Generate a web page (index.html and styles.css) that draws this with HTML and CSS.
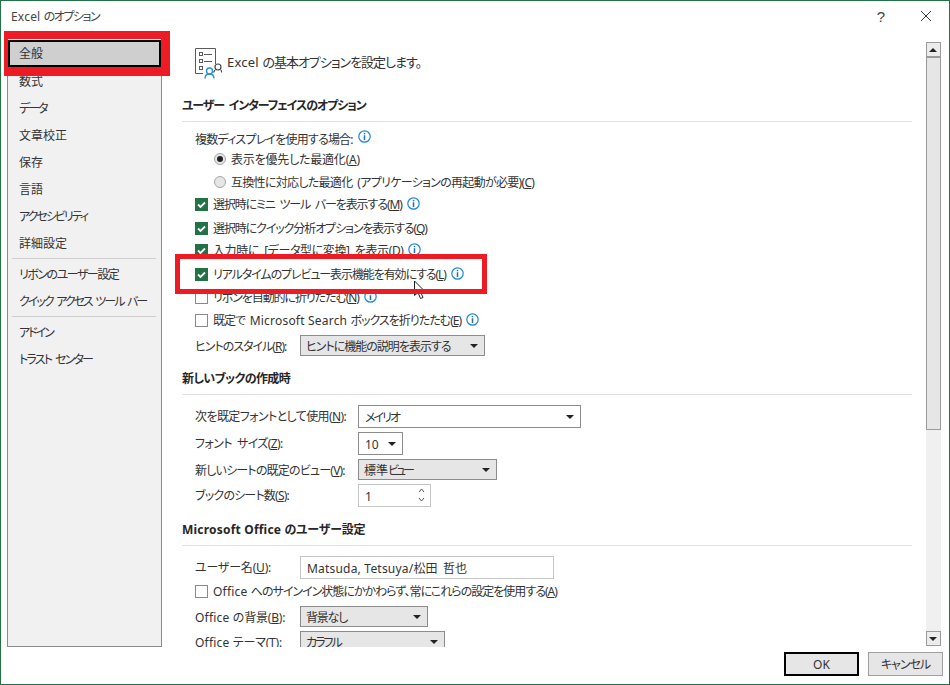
FILE: index.html
```html
<!DOCTYPE html>
<html lang="ja">
<head>
<meta charset="utf-8">
<title>Excel のオプション</title>
<link rel="stylesheet" href="styles.css">
</head>
<body>
<div class="win">
  <header class="titlebar">
    <span class="title ls15"><span class="lat">Excel </span>のオプション</span>
    <div class="winbtns">
      <span class="help">?</span>
      <svg class="close" width="12" height="12" viewBox="0 0 12 12"><path d="M1 1L11 11M11 1L1 11" stroke="#3a3a3a" stroke-width="1" fill="none"/></svg>
    </div>
  </header>
  <div class="body">
    <nav class="nav">
      <div class="nav-item sel">全般</div>
      <div class="nav-item">数式</div>
      <div class="nav-item ls20">データ</div>
      <div class="nav-item">文章校正</div>
      <div class="nav-item">保存</div>
      <div class="nav-item">言語</div>
      <div class="nav-item ls20">アクセシビリティ</div>
      <div class="nav-item">詳細設定</div>
      <div class="nav-sep"></div>
      <div class="nav-item ls15">リボンのユーザー設定</div>
      <div class="nav-item ls20">クイック アクセス ツール バー</div>
      <div class="nav-sep"></div>
      <div class="nav-item ls20">アドイン</div>
      <div class="nav-item ls18">トラスト センター</div>
    </nav>
    <main class="main">
      <div class="intro">
        <svg class="intro-icon" width="27" height="31" viewBox="0 0 27 31">
          <path d="M20.500 16V.5H.5V25.500H8" fill="none" stroke="#5a5a5a"/>
          <rect x="4.500" y="4.500" width="3" height="3" fill="none" stroke="#5a5a5a"/>
          <rect x="4.500" y="11.500" width="3" height="3" fill="none" stroke="#5a5a5a"/>
          <rect x="4.500" y="18.500" width="3" height="3" fill="none" stroke="#5a5a5a"/>
          <path d="M9 6.500h8M9 13.500h8" stroke="#5a5a5a"/>
          <circle cx="14.500" cy="23" r="3" fill="#fff" stroke="#2e8fd8" stroke-width="1.400"/>
          <path d="M10 30.500c0-3 2-4.500 4.500-4.500s4.500 1.500 4.500 4.500" fill="none" stroke="#2e8fd8" stroke-width="1.400"/>
          <circle cx="23" cy="19" r="3" fill="#fff" stroke="#444" stroke-width="1.200"/>
          <path d="M20 22L18.500 24.500M26 22L27 24.500" fill="none" stroke="#444" stroke-width="1.200"/>
        </svg>
        <span class="intro-text"><span class="lat">Excel </span>の基本オプションを設定します。</span>
      </div>

      <h2 class="head head-first ls11">ユーザー インターフェイスのオプション</h2>
      <div class="row h20"><span class="ls8">複数ディスプレイを使用する場合:</span><svg class="info up" viewBox="0 0 13 13"><use href="#i"/></svg></div>
      <div class="row h23 sub"><span class="radio on"></span><span class="ls2">表示を優先した最適化(<u>A</u>)</span></div>
      <div class="row h22 sub"><span class="radio"></span><span class="ls7">互換性に対応した最適化 (アプリケーションの再起動が必要)(<u>C</u>)</span></div>
      <div class="row h24"><span class="check on"><svg viewBox="0 0 13 13"><use href="#c"/></svg></span><span class="ls11">選択時にミニ ツール バーを表示する(<u>M</u>)</span><svg class="info" viewBox="0 0 13 13"><use href="#i"/></svg></div>
      <div class="row h22"><span class="check on"><svg viewBox="0 0 13 13"><use href="#c"/></svg></span><span class="ls11">選択時にクイック分析オプションを表示する(<u>Q</u>)</span></div>
      <div class="row h24"><span class="check on"><svg viewBox="0 0 13 13"><use href="#c"/></svg></span><span class="ls4">入力時に [データ型に変換] を表示(<u>D</u>)</span><svg class="info" viewBox="0 0 13 13"><use href="#i"/></svg></div>
      <div class="row h23"><span class="check on"><svg viewBox="0 0 13 13"><use href="#c"/></svg></span><span class="ls11">リアルタイムのプレビュー表示機能を有効にする(<u>L</u>)</span><svg class="info" viewBox="0 0 13 13"><use href="#i"/></svg></div>
      <div class="row h23"><span class="check"></span><span class="ls11">リボンを自動的に折りたたむ(<u>N</u>)</span><svg class="info" viewBox="0 0 13 13"><use href="#i"/></svg></div>
      <div class="row h25"><span class="check"></span><span class="ls10">既定で <span class="lat">Microsoft Search </span>ボックスを折りたたむ(<u>E</u>)</span><svg class="info" viewBox="0 0 13 13"><use href="#i"/></svg></div>
      <div class="row h26 form"><span class="lbl ls10 w105">ヒントのスタイル(<u>R</u>):</span><div class="ctl dd w185 ls10">ヒントに機能の説明を表示する<i class="arrow"></i></div></div>

      <h2 class="head ls6">新しいブックの作成時</h2>
      <div class="row h27 form"><span class="lbl ls6 w163">次を既定フォントとして使用(<u>N</u>):</span><div class="ctl plain w223 ls20">メイリオ<i class="arrow"></i></div></div>
      <div class="row h27 form"><span class="lbl ls6 w163">フォント サイズ(<u>Z</u>):</span><div class="ctl plain w45">10<i class="arrow"></i></div></div>
      <div class="row h25 form"><span class="lbl ls8 w163">新しいシートの既定のビュー(<u>V</u>):</span><div class="ctl dd w139">標準<span class="ls30">ビュー</span><i class="arrow"></i></div></div>
      <div class="row h26 form"><span class="lbl ls8 w163">ブックのシート数(<u>S</u>):</span><div class="ctl spin w73">1<span class="spinbtn"><svg width="7" height="5" viewBox="0 0 7 5"><path d="M1 4L3.500 1L6 4" fill="none" stroke="#555"/></svg><svg width="7" height="5" viewBox="0 0 7 5"><path d="M1 1L3.500 4L6 1" fill="none" stroke="#555"/></svg></span></div></div>

      <h2 class="head head-ms ls2"><span class="lat">Microsoft Office </span>のユーザー設定</h2>
      <div class="row h25 form"><span class="lbl ls2 w105">ユーザー名(<u>U</u>):</span><div class="ctl spin w254"><span class="lat">Matsuda, Tetsuya/</span>松田 哲也</div></div>
      <div class="row h25"><span class="check"></span><span class="ls10"><span class="lat">Office </span>へのサインイン状態にかかわらず、常にこれらの設定を使用する(<u>A</u>)</span></div>
      <div class="row h25 form"><span class="lbl ls2 w105"><span class="lat">Office </span>の背景(<u>B</u>):</span><div class="ctl dd w128 ls12">背景なし<i class="arrow"></i></div></div>
      <div class="row h26 form"><span class="lbl ls2 w105"><span class="lat">Office </span>テーマ(<u>T</u>):</span><div class="ctl dd w145 ls20">カラフル<i class="arrow"></i></div></div>
    </main>
    <div class="scrollbar">
      <div class="sb-btn"><i class="arrow up"></i></div>
      <div class="sb-thumb"></div>
      <div class="sb-track"></div>
      <div class="sb-btn"><i class="arrow"></i></div>
    </div>
  </div>
  <footer class="footer">
    <button class="btn default">OK</button>
    <button class="btn ls10">キャンセル</button>
  </footer>

  <svg class="cursor" width="13" height="20" viewBox="0 0 13 20"><path d="M1.500 1V15.500L5 12.500L7.500 18.500L10 17.500L7.500 11.500H12Z" fill="#fff" stroke="#222" stroke-width="1"/></svg>
  <div class="mark mark-nav"></div>
  <div class="mark mark-row"></div>
</div>
<svg class="defs" width="0" height="0">
  <defs>
    <g id="i"><circle cx="6.500" cy="6.500" r="5.700" fill="none" stroke="#1f87d6" stroke-width="1.200"/><path d="M6.500 3V4.300M6.500 5.300V10" stroke="#1f6fb0" stroke-width="1.500"/></g>
    <path id="c" d="M3 6.500L5.500 9L10 4.500" fill="none" stroke="#fff" stroke-width="1.800"/>
  </defs>
</svg>
</body>
</html>
```

FILE: styles.css
```css
* { box-sizing: border-box; }
html, body { margin: 0; padding: 0; background: #fff; }
body {
  width: 950px;
  height: 685px;
  overflow: hidden;
  font-family: "Noto Sans", "Noto Sans CJK JP", sans-serif;
  font-feature-settings: "palt";
  font-size: 12px;
  word-spacing: 2.5px;
  color: #333;
}
.defs { position: absolute; }
.lat { letter-spacing: .2px; word-spacing: 0; }
.ls2 { letter-spacing: -.2px; }
.ls4 { letter-spacing: -.4px; }
.ls6 { letter-spacing: -.6px; }
.ls7 { letter-spacing: -.7px; }
.ls8 { letter-spacing: -.8px; }
.ls10 { letter-spacing: -1px; }
.ls11 { letter-spacing: -1.1px; }
.ls12 { letter-spacing: -1.2px; }
.ls15 { letter-spacing: -1.5px; }
.ls18 { letter-spacing: -1.8px; }
.ls20 { letter-spacing: -2px; }
.ls30 { letter-spacing: -3px; }
.win {
  position: relative;
  width: 950px;
  height: 685px;
  border: 1px solid #217346;
  display: flex;
  flex-direction: column;
  background: #fff;
}
.titlebar {
  height: 37px;
  flex: none;
  display: flex;
  align-items: center;
  justify-content: space-between;
  padding: 0 17px 7px 10px;
}
.title { font-size: 12px; color: #444; }
.winbtns { display: flex; align-items: center; gap: 35px; }
.help { font-size: 15px; color: #444; font-family: "Liberation Sans", sans-serif; }
.body { flex: none; height: 609px; display: flex; }
.nav {
  flex: none;
  margin-left: 6px;
  width: 155px;
  height: 609px;
  background: #f1f1f1;
  border: 1px solid #8c8c8c;
  display: flex;
  flex-direction: column;
  padding: 1px 0 0 0;
}
.nav-item {
  height: 27px;
  line-height: 29px;
  padding-left: 11px;
  flex: none;
  color: #333;
  white-space: nowrap;
}
.nav-item.sel {
  background: #cfcfcf;
  border: 2px solid #000;
  padding-left: 9px;
  line-height: 24px;
}
.nav-sep { height: 1px; margin: 2px 5px 1px 4px; background: #cfcfcf; flex: none; }
.main {
  flex: none;
  width: 764px;
  height: 609px;
  overflow: hidden;
  padding: 5px 0 0 20px;
}
.intro { display: flex; align-items: center; gap: 5px; height: 37px; padding-left: 13px; }
.intro-icon { flex: none; margin-top: 3px; }
.intro-text { font-size: 13px; color: #333; letter-spacing: -1px; }
.head {
  margin: 6px 14px 10px 0;
  font-size: 12px;
  font-weight: 700;
  color: #262626;
  height: 28px;
  line-height: 23px;
  border-bottom: 1px solid #e1e1e1;
}
.head-first { margin: 14px 14px 7px 0; }
.head-ms { margin-top: 8px; }
.row { display: flex; align-items: flex-start; padding-left: 13px; line-height: 22px; white-space: nowrap; }
.row.sub { padding-left: 32px; }
.h20 { height: 20px; }
.h22 { height: 22px; }
.h23 { height: 23px; }
.h24 { height: 24px; }
.h25 { height: 25px; }
.h26 { height: 26px; }
.h27 { height: 27px; }
.lbl { flex: none; line-height: 24px; }
.w105 { width: 105px; }
.w163 { width: 163px; }
.radio {
  flex: none;
  width: 12px;
  height: 12px;
  border-radius: 50%;
  border: 1px solid #a6a6a6;
  background: #e6e6e6;
  margin: 4px 5px 0 0;
  display: flex;
  align-items: center;
  justify-content: center;
}
.radio.on::after { content: ""; width: 6px; height: 6px; border-radius: 50%; background: #222; }
.check {
  flex: none;
  width: 13px;
  height: 13px;
  border: 1px solid #8a8a8a;
  background: #fff;
  margin: 4px 5px 0 0;
}
.check.on { background: #217346; border-color: #217346; }
.check svg { display: block; width: 13px; height: 13px; margin: -1px; }
.info { flex: none; width: 13px; height: 13px; margin: 3px 0 0 5px; }
.info.up { margin-top: 1px; }
.ctl {
  flex: none;
  position: relative;
  height: 23px;
  line-height: 23px;
  padding-left: 6px;
  border: 1px solid #9a9a9a;
  color: #333;
}
.dd { height: 21px; line-height: 22px; padding-left: 5px; background: #e6e6e6; border-color: #8c8c8c; }
.plain { background: #fff; border-color: #8c8c8c; }
.spin { background: #fff; border-color: #c6c6c6; }
.w45 { width: 45px; }
.w73 { width: 73px; }
.w128 { width: 128px; }
.w139 { width: 139px; }
.w145 { width: 145px; }
.w185 { width: 185px; }
.w223 { width: 223px; }
.w254 { width: 254px; }
.arrow {
  position: absolute;
  right: 6px;
  top: 50%;
  margin-top: -2px;
  width: 0;
  height: 0;
  border-left: 4px solid transparent;
  border-right: 4px solid transparent;
  border-top: 4px solid #222;
}
.arrow.up { border-top: 0; border-bottom: 4px solid #222; }
.spinbtn {
  position: absolute;
  right: 5px;
  top: 3px;
  display: flex;
  flex-direction: column;
  gap: 4px;
}
.spinbtn svg { display: block; }
.scrollbar {
  flex: none;
  width: 15px;
  height: 604px;
  margin-top: 4px;
  display: flex;
  flex-direction: column;
}
.sb-btn {
  position: relative;
  flex: none;
  height: 15px;
  background: #ececec;
  border: 1px solid #9a9a9a;
}
.sb-btn .arrow { right: 3px; }
.sb-thumb {
  flex: none;
  height: 373px;
  background: #e6e6e6;
  border: 1px solid #9a9a9a;
}
.sb-track { flex: 1; background: #f0f0f0; }
.footer {
  flex: none;
  display: flex;
  justify-content: flex-end;
  gap: 9px;
  padding: 5px 6px 0 0;
}
.btn {
  width: 75px;
  height: 24px;
  padding: 0;
  background: #e6e6e6;
  border: 1px solid #a0a0a0;
  font-family: inherit;
  font-size: 12px;
  font-feature-settings: inherit;
  color: #333;
}
.btn.default { border: 2px solid #000; }
.cursor { position: absolute; left: 412px; top: 279px; }
.mark { position: absolute; border-style: solid; border-color: #ed1c24; }
.mark-nav { left: 3px; top: 30px; width: 166px; height: 45px; border-width: 8px 9px 9px 4px; }
.mark-row { left: 174px; top: 253px; width: 312px; height: 40px; border-width: 5px; }
```
